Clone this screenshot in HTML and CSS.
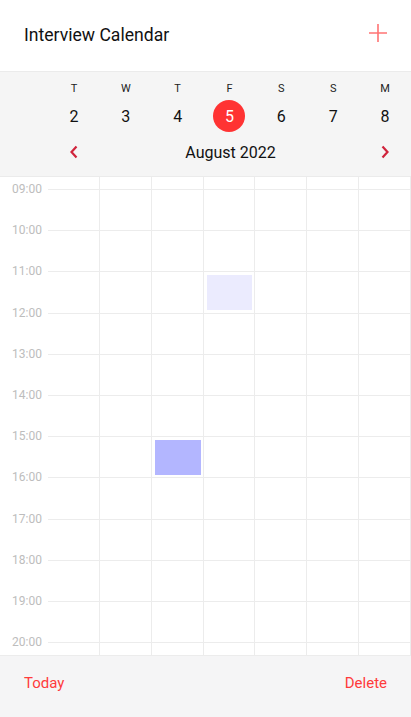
FILE: index.html
```html
<!DOCTYPE html>
<html>
<head>
<meta charset="utf-8">
<link rel="stylesheet" href="styles.css">
</head>
<body>
<div class="app">
  <header class="top">
    <div class="title">Interview Calendar</div>
    <svg class="plus" width="20" height="20" viewBox="0 0 20 20"><path d="M10 1v18M1 10h18" stroke="#ff5a5a" stroke-width="1.6" fill="none" opacity="0.85"/></svg>
  </header>
  <section class="week">
    <div class="row letters">
      <span></span><span>T</span><span>W</span><span>T</span><span>F</span><span>S</span><span>S</span><span>M</span>
    </div>
    <div class="row nums">
      <span></span><span>2</span><span>3</span><span>4</span><span><b class="today">5</b></span><span>6</span><span>7</span><span>8</span>
    </div>
    <div class="row month">
      <span></span>
      <span class="chev"><svg width="10" height="14" viewBox="0 0 10 14"><path d="M7.5 1.5 2.5 7l5 5.5" stroke="#d0243c" stroke-width="2.2" fill="none"/></svg></span>
      <span class="mlabel">August 2022</span>
      <span class="chev"><svg width="10" height="14" viewBox="0 0 10 14"><path d="M2.5 1.5 7.5 7l-5 5.5" stroke="#d0243c" stroke-width="2.2" fill="none"/></svg></span>
    </div>
  </section>
  <section class="body">
    <div class="hours">
      <div class="hour"><span class="label">09:00</span><span class="line"></span></div>
      <div class="hour"><span class="label">10:00</span><span class="line"></span></div>
      <div class="hour"><span class="label">11:00</span><span class="line"></span></div>
      <div class="hour"><span class="label">12:00</span><span class="line"></span></div>
      <div class="hour"><span class="label">13:00</span><span class="line"></span></div>
      <div class="hour"><span class="label">14:00</span><span class="line"></span></div>
      <div class="hour"><span class="label">15:00</span><span class="line"></span></div>
      <div class="hour"><span class="label">16:00</span><span class="line"></span></div>
      <div class="hour"><span class="label">17:00</span><span class="line"></span></div>
      <div class="hour"><span class="label">18:00</span><span class="line"></span></div>
      <div class="hour"><span class="label">19:00</span><span class="line"></span></div>
      <div class="hour"><span class="label">20:00</span><span class="line"></span></div>
      <div class="hour"><span class="label">21:00</span><span class="line"></span></div>
    </div>
    <div class="cols">
      <div class="col"></div>
      <div class="col"></div>
      <div class="col"><div class="event ev-strong" style="top:263px"></div></div>
      <div class="col"><div class="event ev-light" style="top:98px"></div></div>
      <div class="col"></div>
      <div class="col"></div>
      <div class="col"></div>
    </div>
  </section>
  <footer class="foot">
    <span class="btn">Today</span>
    <span class="btn">Delete</span>
  </footer>
</div>
</body>
</html>
```
FILE: styles.css
```css
* { box-sizing: border-box; }
html, body { margin: 0; padding: 0; background: #fff; }
body { font-family: Roboto, "Noto Sans", sans-serif; color: #111; }
.app { width: 411px; height: 717px; display: flex; flex-direction: column; overflow: hidden; }

.top {
  height: 72px;
  padding: 0 23px 0 24px;
  display: flex;
  align-items: center;
  justify-content: space-between;
  border-bottom: 1px solid #ebebeb;
  flex-shrink: 0;
}
.title { font-size: 17.6px; color: #111; margin-top: -1px; }
.plus { display: block; margin-top: -6px; }

.week {
  background: #f5f5f5;
  padding: 8px 0 8px;
  border-bottom: 1px solid #ebebeb;
  flex-shrink: 0;
  height: 105px;
}
.row { display: grid; grid-template-columns: 48px repeat(7, 1fr); }
.row span { display: flex; align-items: center; justify-content: center; }
.letters { height: 16px; font-size: 11px; color: #222; }
.nums { height: 40px; font-size: 16px; color: #111; }
.today {
  width: 32px; height: 32px; border-radius: 50%;
  background: #ff3333; color: #fff; font-weight: 400;
  display: flex; align-items: center; justify-content: center;
}
.month { height: 32px; grid-template-columns: 48px 1fr 5fr 1fr; font-size: 16px; color: #111; }
.mlabel { padding-left: 2px; }
.chev svg { display: block; }

.body { position: relative; height: 478px; overflow: hidden; flex-shrink: 0; }
.hours { padding-top: 12px; }
.hour { height: 41.2px; display: flex; }
.label {
  width: 48px; padding-right: 6px; text-align: right;
  font-size: 12px; line-height: 14px; height: 14px;
  margin-top: -7px; color: #bdbdbd;
}
.line { flex: 1; border-top: 1px solid #ececec; }

.cols {
  position: absolute; top: 0; bottom: 0; left: 48px; right: 0;
  display: grid; grid-template-columns: repeat(7, 1fr);
}
.col { position: relative; border-right: 1px solid #ececec; }
.event { position: absolute; left: 3px; right: 2px; height: 35px; }
.ev-light { background: #ebebfe; }
.ev-strong { background: #b3b6ff; }

.foot {
  flex: 1;
  background: #f5f5f6;
  border-top: 1px solid #ececec;
  display: flex;
  justify-content: space-between;
  align-items: flex-start;
  padding: 17px 24px 0;
}
.btn { font-size: 15px; line-height: 20px; color: #ff3b3b; }
```
